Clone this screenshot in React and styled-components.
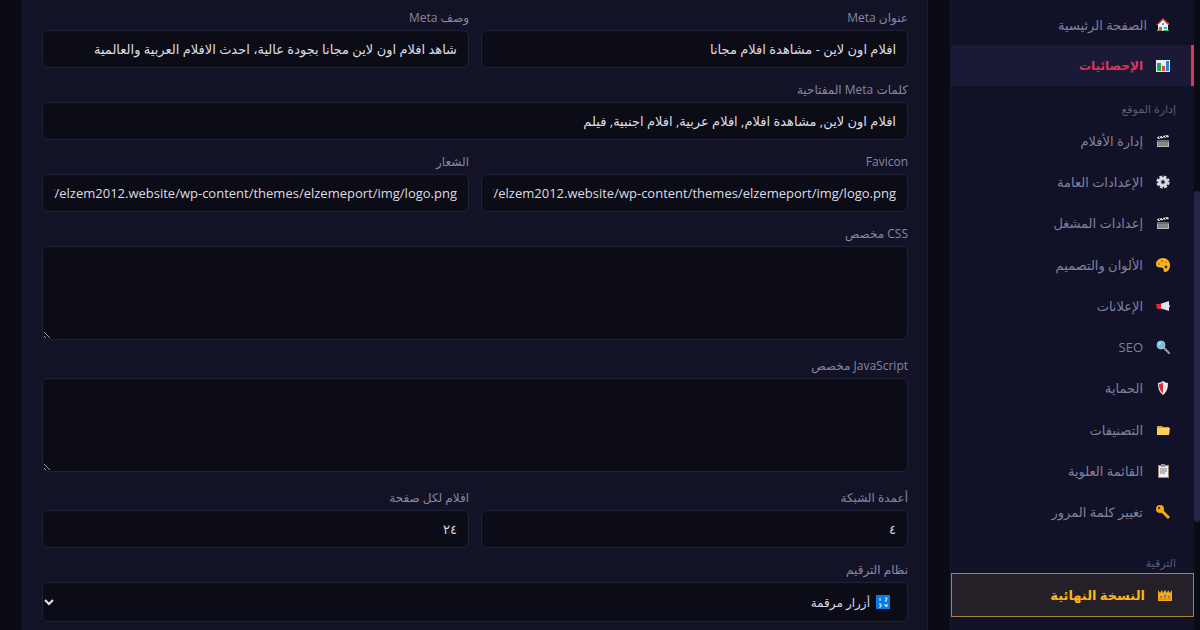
import React from "react";
import styled, { createGlobalStyle, css } from "styled-components";

const GlobalStyle = createGlobalStyle`
  * { box-sizing: border-box; }
  body {
    margin: 0;
    background: #0b0b16;
    color: #dcdce4;
    font-family: "Open Sans", "Noto Sans", "DejaVu Sans", sans-serif;
  }
`;

const Page = styled.div`
  display: flex;
  height: 100vh;
  overflow: hidden;
`;

const ScrollTrack = styled.div`
  flex: none;
  width: 6px;
  padding-top: 191px;
  background: #0b0b14;
`;

const ScrollThumb = styled.div`
  height: 331px;
  border-radius: 3px;
  background: #25254a;
`;

const Sidebar = styled.aside`
  flex: none;
  width: 244px;
  padding-top: 4px;
  background: #111127;
  border-left: 1px solid #1b1b33;
`;

const NavGroup = styled.nav`
  display: flex;
  flex-direction: column;
  min-height: ${(p) => p.$height}px;
`;

const NavLink = styled.a`
  flex: 1;
  display: flex;
  align-items: center;
  gap: ${(p) => (p.$tight ? 4 : 8)}px;
  padding: 0 16px;
  border-right: 3px solid transparent;
  color: #8080a0;
  font-size: 13px;
  line-height: 20px;
  text-decoration: none;
  ${(p) =>
    p.$active &&
    css`
      background: #1a1a36;
      border-right-color: #e0355a;
      color: #e0355a;
      font-size: 12px;
      font-weight: 700;
    `}
`;

const PremiumLink = styled(NavLink)`
  flex: none;
  height: 44px;
  border: 1px solid #a58440;
  background: #252027;
  color: #fbb41f;
  font-size: 13px;
  font-weight: 700;
`;

const IconSlot = styled.span`
  flex: none;
  display: flex;
  justify-content: center;
  width: 24px;
`;

const NavHeading = styled.h2`
  margin: 0;
  padding: ${(p) => p.$top}px 18px 0;
  height: ${(p) => p.$height}px;
  color: #5c5c72;
  font-size: 11px;
  font-weight: 400;
  line-height: 18px;
`;

const Main = styled.main`
  flex: 1;
  min-width: 0;
  padding: 0 22px;
`;

const Card = styled.form`
  display: flex;
  flex-direction: column;
  gap: 13px;
  min-height: 100vh;
  padding: 9px 19px;
  background: #131328;
  border: solid #1d1d36;
  border-width: 0 1px;
`;

const FieldRow = styled.div`
  display: grid;
  grid-template-columns: 1fr 1fr;
  gap: 12px;
`;

const Field = styled.div`
  display: flex;
  flex-direction: column;
  gap: 3px;
  min-width: 0;
  padding-bottom: ${(p) => (p.$area ? 4 : 0)}px;
`;

const Label = styled.label`
  color: #8686a2;
  font-size: 12px;
  line-height: 18px;
`;

const control = css`
  width: 100%;
  margin: 0;
  border: 1px solid #21213a;
  border-radius: 6px;
  background: #0c0c17;
  color: #dcdce4;
  font-family: inherit;
  font-size: 13px;
  outline: none;
`;

const TextInput = styled.input`
  ${control}
  height: 38px;
  padding: 0 11px;
`;

const TextArea = styled.textarea`
  ${control}
  display: block;
  height: 94px;
  padding: 10px 12px;
  resize: vertical;
`;

const SelectWrap = styled.div`
  display: grid;
  align-items: center;
  > * { grid-area: 1 / 1; }
  > svg { pointer-events: none; z-index: 1; }
`;

const Select = styled.select`
  ${control}
  appearance: none;
  height: 40px;
  padding: 0 37px 0 12px;
  font-size: 12px;
`;

const OptionIcon = styled.svg`
  justify-self: start;
  margin-right: 18px;
`;

const Chevron = styled.svg`
  justify-self: end;
  margin-left: 2px;
`;

const shapes = {
  home: (
    <>
      <path d="M2 6h10v7H2z" fill="#e9f0f2" />
      <path d="M7 0 0 7h2l5-4 5 4h1V5l-2-1z" fill="#d8442e" />
      <path d="M2 7l5-5 5 5v1H2z" fill="#f3f5f5" />
      <path d="M3 9h3v4H3z" fill="#e35b2d" />
      <path d="M6 5h2v2H6zM8 9h3v2H8z" fill="#39a9dc" />
      <path d="M1 12h2v1H1zM7 12h6v1H7z" fill="#36b56b" />
    </>
  ),
  chart: (
    <>
      <path d="M0 1h14v12H0z" fill="#e8eef2" />
      <path d="M1 4h4v8H1z" fill="#26a65b" />
      <path d="M6 7h3v5H6z" fill="#e34b32" />
      <path d="M10 2h3v10h-3z" fill="#2385dc" />
    </>
  ),
  film: (
    <>
      <path d="M1 6h12v7H1z" fill="#b9b9b4" />
      <path d="M1 3 12 1l1 2L2 5z" fill="#dededa" />
      <path d="m3 3 2 2M6 2l2 2M9 2l2 2M1 7h12" stroke="#22222a" strokeWidth="1" />
      <path d="M2 9h10M2 11h10" stroke="#555555" strokeWidth="1" />
    </>
  ),
  gear: (
    <>
      <circle cx="7" cy="7" r="5" fill="#d9e0e3" />
      <circle cx="7" cy="7" r="5.6" fill="none" stroke="#d9e0e3" strokeWidth="2" strokeDasharray="2.9 1.5" />
      <circle cx="7" cy="7" r="2" fill="#111127" stroke="#8b979d" />
    </>
  ),
  palette: (
    <>
      <path d="M7 0c4 0 7 3 7 7s-2 7-5 7c-2 0-1-3-2-4S0 11 0 6c0-3 3-6 7-6z" fill="#fbb613" />
      <circle cx="3" cy="6" r="1" fill="#43a047" />
      <circle cx="6" cy="3" r="1" fill="#e53935" />
      <circle cx="10" cy="4" r="1" fill="#f17a1c" />
      <circle cx="10" cy="9" r="1.4" fill="#27304e" />
    </>
  ),
  horn: (
    <>
      <path d="M4 5 13 2v10L4 9z" fill="#dfe4e6" />
      <path d="M0 5h5v5H1z" fill="#e32636" />
      <path d="M5 10h3v1H6z" fill="#8f1d2b" />
      <path d="M13 6h1v2h-1z" fill="#b7bfc4" />
    </>
  ),
  search: (
    <>
      <path d="m8 8 5 5" stroke="#9aa0a8" strokeWidth="2" strokeLinecap="round" />
      <circle cx="5" cy="5" r="4" fill="#79bedf" stroke="#a6c7d6" />
      <path d="M3 5a2 2 0 0 1 2-2" stroke="#e5f6ff" fill="none" />
    </>
  ),
  shield: (
    <>
      <path d="M7 0c2 1 3 2 5 2 0 5-1 9-5 12C3 11 2 7 2 2c2 0 3-1 5-2z" fill="#e8e8ea" />
      <path d="M7 1.500v11C4 10 3 7 3 3c2 0 3-1 4-1.500z" fill="#dc2f3b" />
    </>
  ),
  folder: (
    <>
      <path d="M1 3h5l1 1h6v8H1z" fill="#e0a52d" />
      <path d="M1 5h13l-1 7H1z" fill="#fdd05b" />
    </>
  ),
  clipboard: (
    <>
      <path d="M2 1h11v13H2z" fill="#a8836c" />
      <path d="M3 2h9v11H3z" fill="#f0f0ee" />
      <path d="M5 0h4v3H5z" fill="#8b969d" />
      <path d="M4 5h7M4 7h7M4 9h5" stroke="#7a8086" strokeWidth="1" />
    </>
  ),
  key: (
    <>
      <path d="m6 6 7 7" stroke="#f5a80f" strokeWidth="3" />
      <circle cx="4" cy="4" r="4" fill="#f5a80f" />
      <circle cx="3" cy="3" r="1" fill="#111127" />
    </>
  ),
  crown: (
    <>
      <path d="M0 2l2 3 2-3 1 3 2-3 2 3 1-3 2 3 2-3v11H0z" fill="#f9ab17" />
      <path d="M1 11h12" stroke="#c77c0a" strokeWidth="1" />
      <circle cx="3" cy="9" r="1" fill="#e53935" />
      <circle cx="7" cy="8" r="1.500" fill="#26a69a" />
      <circle cx="11" cy="9" r="1" fill="#e53935" />
    </>
  ),
};

const Icon = ({ name }) => (
  <svg width="14" height="14" viewBox="0 0 14 14" fill="none" aria-hidden="true">
    {shapes[name]}
  </svg>
);

const NavItem = ({ icon, children, as: Link = NavLink, ...rest }) => (
  <Link href="#" {...rest}>
    <IconSlot><Icon name={icon} /></IconSlot>
    {children}
  </Link>
);

const TextField = ({ id, label, value }) => (
  <Field>
    <Label htmlFor={id}>{label}</Label>
    <TextInput id={id} type="text" defaultValue={value} />
  </Field>
);

const AreaField = ({ id, label }) => (
  <Field $area>
    <Label htmlFor={id}>{label}</Label>
    <TextArea id={id} />
  </Field>
);

const siteLinks = [
  ["film", "إدارة الأفلام"],
  ["gear", "الإعدادات العامة"],
  ["film", "إعدادات المشغل"],
  ["palette", "الألوان والتصميم"],
  ["horn", "الإعلانات"],
  ["search", "SEO"],
  ["shield", "الحماية"],
  ["folder", "التصنيفات"],
  ["clipboard", "القائمة العلوية"],
  ["key", "تغيير كلمة المرور"],
];

const logoUrl = "https://elzem2012.website/wp-content/themes/elzemeport/img/logo.png";

export default function App() {
  return (
    <>
      <GlobalStyle />
      <Page dir="rtl" lang="ar">
        <ScrollTrack><ScrollThumb /></ScrollTrack>
        <Sidebar>
          <NavGroup $height={82}>
            <NavItem icon="home" $tight>الصفحة الرئيسية</NavItem>
            <NavItem icon="chart" $active>الإحصائيات</NavItem>
          </NavGroup>
          <NavHeading $top={14} $height={34}>إدارة الموقع</NavHeading>
          <NavGroup $height={413}>
            {siteLinks.map(([icon, text]) => (
              <NavItem key={text} icon={icon}>{text}</NavItem>
            ))}
          </NavGroup>
          <NavHeading $top={21} $height={40}>الترقية</NavHeading>
          <NavItem as={PremiumLink} icon="crown">النسخة النهائية</NavItem>
        </Sidebar>
        <Main>
          <Card>
            <FieldRow>
              <TextField id="meta-title" label="عنوان Meta" value="افلام اون لاين - مشاهدة افلام مجانا" />
              <TextField id="meta-desc" label="وصف Meta" value="شاهد افلام اون لاين مجانا بجودة عالية، احدث الافلام العربية والعالمية" />
            </FieldRow>
            <TextField id="meta-keys" label="كلمات Meta المفتاحية" value="افلام اون لاين, مشاهدة افلام, افلام عربية, افلام اجنبية, فيلم" />
            <FieldRow>
              <TextField id="favicon" label="Favicon" value={logoUrl} />
              <TextField id="logo" label="الشعار" value={logoUrl} />
            </FieldRow>
            <AreaField id="custom-css" label="CSS مخصص" />
            <AreaField id="custom-js" label="JavaScript مخصص" />
            <FieldRow>
              <TextField id="columns" label="أعمدة الشبكة" value="٤" />
              <TextField id="per-page" label="افلام لكل صفحة" value="٢٤" />
            </FieldRow>
            <Field>
              <Label htmlFor="paging">نظام الترقيم</Label>
              <SelectWrap>
                <Select id="paging" defaultValue="numbers">
                  <option value="numbers">أزرار مرقمة</option>
                </Select>
                <OptionIcon width="14" height="14" viewBox="0 0 14 14" aria-hidden="true">
                  <path d="M0 0h14v14H0z" fill="#0a7be0" />
                  <path d="M4 3v3M9 3h2v1L9 6h2M3 9h2v3H3M9 9v2h2M11 9v3" stroke="#e8f4ff" fill="none" />
                </OptionIcon>
                <Chevron width="10" height="10" viewBox="0 0 10 10" fill="none" aria-hidden="true">
                  <path d="m1 3 4 4 4-4" stroke="#e6e6ec" strokeWidth="2" />
                </Chevron>
              </SelectWrap>
            </Field>
          </Card>
        </Main>
      </Page>
    </>
  );
}
